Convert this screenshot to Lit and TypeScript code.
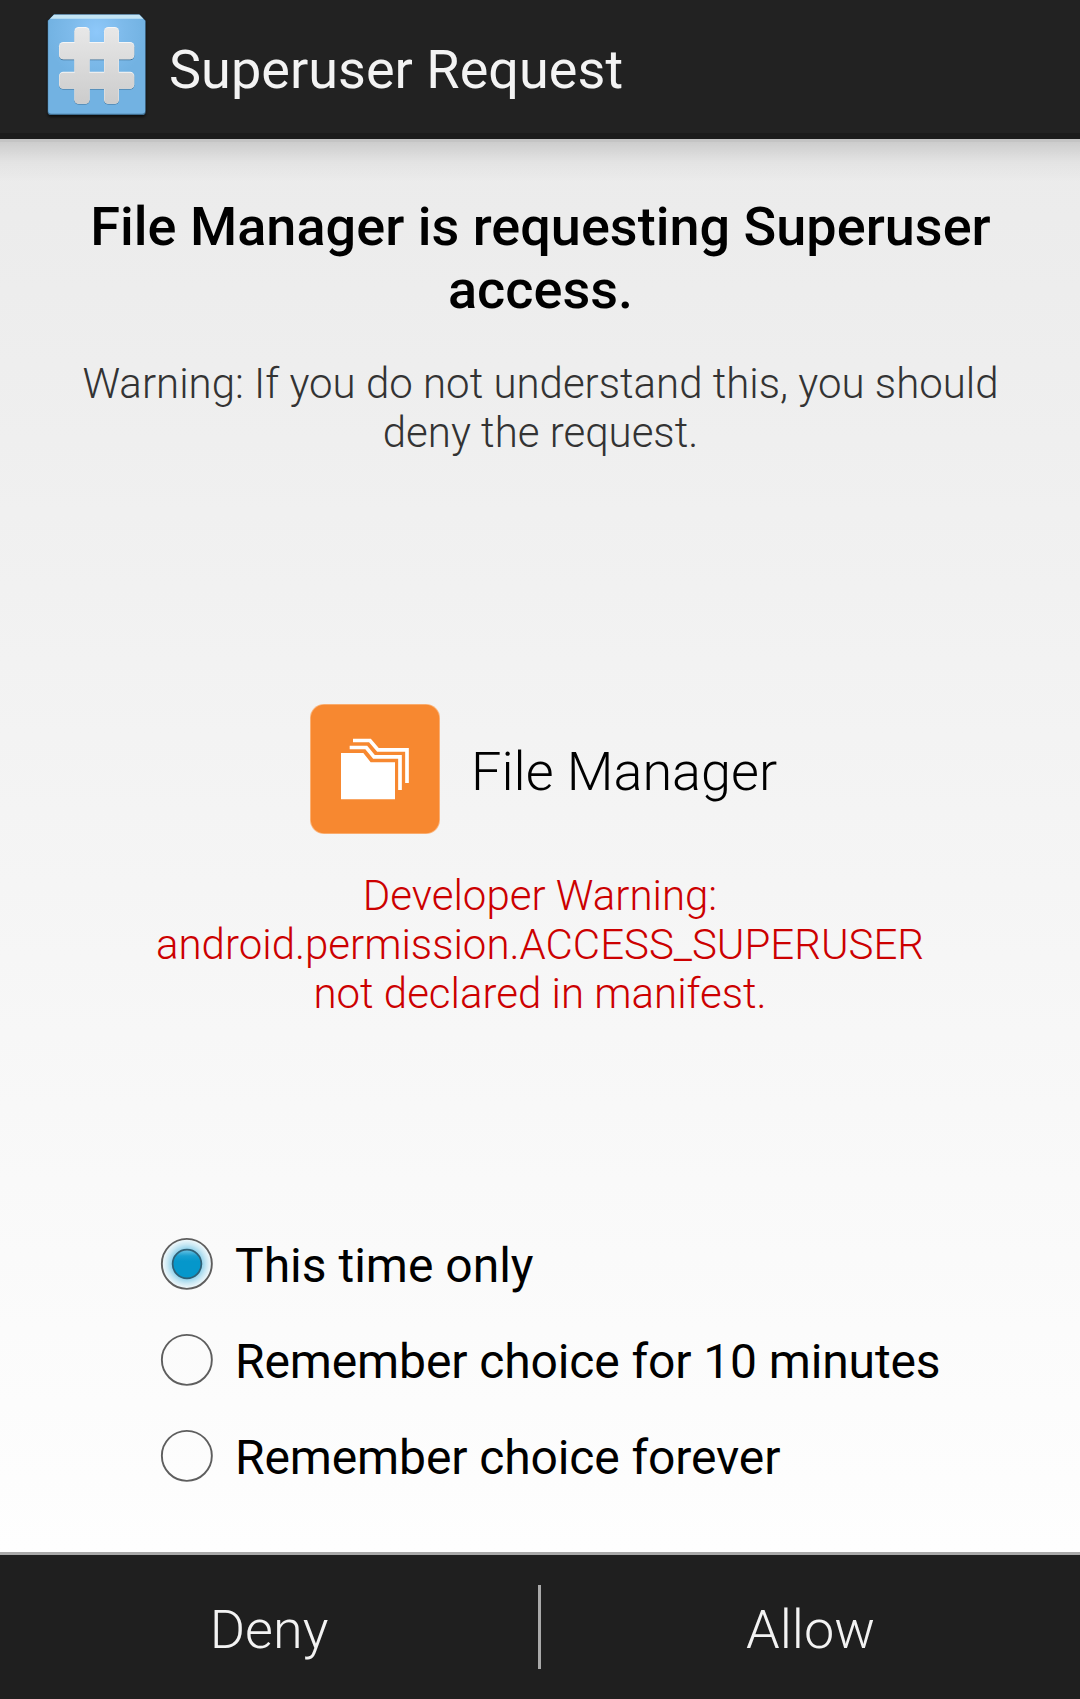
import { LitElement, html, css, svg } from "lit";
import { customElement, property, state } from "lit/decorators.js";
import { classMap } from "lit/directives/class-map.js";

@customElement("superuser-icon")
class SuperuserIcon extends LitElement {
  static styles = css`
    :host { display: block; }
    .icon { display: block; width: 105px; height: 133px; }
  `;

  private hash() {
    return svg`
      <rect x="133" y="81" width="46" height="230" rx="13" />
      <rect x="222" y="81" width="45" height="230" rx="13" />
      <rect x="87" y="126" width="226" height="52" rx="13" />
      <rect x="87" y="215" width="226" height="51" rx="13" />`;
  }

  render() {
    return html`
      <svg class="icon" viewBox="45 0 315 399" aria-hidden="true">
        <defs>
          <radialGradient id="face" gradientUnits="userSpaceOnUse" cx="200" cy="95" r="150">
            <stop offset="0" stop-color="#8ec8fa" />
            <stop offset="0.55" stop-color="#7dbaea" />
            <stop offset="1" stop-color="#72b2e2" />
          </radialGradient>
          <linearGradient id="metal" gradientUnits="userSpaceOnUse" x1="0" y1="81" x2="0" y2="311">
            <stop offset="0" stop-color="#e8e8e8" />
            <stop offset="1" stop-color="#cccccc" />
          </linearGradient>
          <filter id="soft" x="-10%" y="-10%" width="120%" height="125%">
            <feGaussianBlur stdDeviation="5" />
          </filter>
          <filter id="edge" x="-10%" y="-10%" width="120%" height="120%">
            <feGaussianBlur stdDeviation="1.3" />
          </filter>
        </defs>
        <rect x="54" y="60" width="292" height="290" rx="8" fill="#000" opacity="0.7" filter="url(#soft)" />
        <path d="M53 62 L72 43 H328 L347 62 V335 Q347 345 337 345 H63 Q53 345 53 335Z" fill="#3f6d8f" />
        <path d="M54.500 62 L72 44 H328 L345.500 62 V332 Q345.500 341 336 341 H64 Q54.500 341 54.500 332Z" fill="url(#face)" />
        <path d="M60 56 L72 44 H328 L340 56Z" fill="#c3e4f4" />
        <g fill="#2c5474" opacity="0.7" filter="url(#edge)" transform="translate(0 2.500)">${this.hash()}</g>
        <g fill="#f6f6f6">${this.hash()}</g>
        <g fill="url(#metal)">
          <rect x="134" y="84" width="44" height="227" rx="12" />
          <rect x="223" y="84" width="43" height="227" rx="12" />
          <rect x="88" y="129" width="224" height="49" rx="12" />
          <rect x="88" y="218" width="224" height="48" rx="12" />
        </g>
      </svg>
    `;
  }
}

@customElement("file-manager-icon")
class FileManagerIcon extends LitElement {
  static styles = css`
    :host { display: block; }
    .icon { display: block; width: 130px; height: 130px; }
  `;

  render() {
    return html`
      <svg class="icon" viewBox="30 42 390 390" aria-hidden="true">
        <rect x="30" y="42" width="390" height="390" rx="42" fill="#fbb780" />
        <rect x="32.500" y="44.500" width="385" height="385" rx="40" fill="#f78830" />
        <path d="M123 189H190L212 217H285V328H123Z" fill="#fff" />
        <path d="M149 172.500H199L222 200.500H300V300" fill="none" stroke="#fff" stroke-width="11" />
        <path d="M159 151.500H210L234 179.500H321V279" fill="none" stroke="#fff" stroke-width="11" />
      </svg>
    `;
  }
}

@customElement("choice-row")
class ChoiceRow extends LitElement {
  @property() label = "";
  @property({ type: Boolean }) checked = false;

  static styles = css`
    :host { display: block; }
    .row { display: flex; align-items: center; height: 96px; gap: 18px; cursor: pointer; }
    .mark { display: block; width: 60px; height: 60px; margin-bottom: 4px; }
    .label { font-size: 48px; line-height: 56px; white-space: nowrap; color: #000; }
    .long { letter-spacing: -0.12px; }
  `;

  render() {
    return html`
      <div class="row" role="radio" aria-checked=${this.checked ? "true" : "false"}>
        <svg class="mark" viewBox="0 0 60 60" aria-hidden="true">
          <defs>
            <radialGradient id="glow">
              <stop offset="0.550" stop-color="#86cde9" />
              <stop offset="0.780" stop-color="#c9e8f4" />
              <stop offset="1" stop-color="#f8fbfc" />
            </radialGradient>
            <linearGradient id="dot" x1="0" y1="0" x2="0" y2="1">
              <stop offset="0" stop-color="#6fc4e4" />
              <stop offset="0.220" stop-color="#189fd0" />
              <stop offset="0.400" stop-color="#0597cb" />
              <stop offset="1" stop-color="#0597cb" />
            </linearGradient>
          </defs>
          ${this.checked ? svg`<circle cx="29.850" cy="29.850" r="25" fill="url(#glow)" />` : null}
          <circle cx="29.850" cy="29.850" r="25" fill="none" stroke="#5e5e5e" stroke-width="1.900" />
          ${this.checked
            ? svg`<circle cx="30" cy="30" r="14.400" fill="url(#dot)" stroke="#2f6076" stroke-width="1.700" />`
            : null}
        </svg>
        <span class=${classMap({ label: true, long: this.label.length > 20 })}>${this.label}</span>
      </div>
    `;
  }
}

@customElement("app-root")
class AppRoot extends LitElement {
  @state() private selected = 0;

  private choices = ["This time only", "Remember choice for 10 minutes", "Remember choice forever"];

  static styles = css`
    :host {
      display: flex;
      flex-direction: column;
      width: 1080px;
      height: 1699px;
      font-family: Roboto, "Noto Sans", sans-serif;
      font-weight: 400;
      overflow: hidden;
    }
    .bar {
      box-sizing: border-box;
      display: flex;
      align-items: center;
      gap: 19px;
      height: 139px;
      padding-left: 45px;
      background: #222;
      border-bottom: 6px solid #1b1b1b;
      flex: none;
    }
    .title {
      margin: 6px 0 0;
      font-size: 54px;
      line-height: 63px;
      font-weight: 400;
      letter-spacing: 0.03px;
      color: #f3f3f3;
    }
    .content {
      box-sizing: border-box;
      flex: 1;
      display: flex;
      flex-direction: column;
      padding-top: 53px;
      border-top: 3px solid #c4c4c4;
      background:
        linear-gradient(rgba(0, 0, 0, 0.13), rgba(0, 0, 0, 0.035) 20px, rgba(0, 0, 0, 0) 40px) top / 100% 40px no-repeat,
        linear-gradient(#ebebeb, #fefefe);
    }
    .heading {
      margin: 0 47px 0 48px;
      text-align: center;
      font-size: 54px;
      line-height: 63px;
      font-weight: 500;
      letter-spacing: 0.02px;
      color: #000;
    }
    .notice {
      margin: 38px 47px 0 48px;
      text-align: center;
      font-size: 42px;
      line-height: 49px;
      font-weight: 300;
      color: #333;
    }
    .app { display: flex; align-items: center; gap: 31px; margin: 247px 0 0 310px; height: 130px; }
    .name { padding-top: 5px; font-size: 54px; line-height: 63px; font-weight: 300; color: #000; }
    .developer {
      margin: 37px 144px 0;
      text-align: center;
      font-size: 42px;
      line-height: 49px;
      font-weight: 300;
      color: #c00;
    }
    .choices { margin: 200px 0 0 157px; }
    .actions {
      box-sizing: border-box;
      display: flex;
      align-items: center;
      height: 147px;
      flex: none;
      background: #1f1f1f;
      border-top: 3px solid #a9a9a9;
    }
    .action {
      flex: 1;
      height: 144px;
      padding: 5px 0 0;
      border: 0;
      background: none;
      font: 300 54px/63px Roboto, "Noto Sans", sans-serif;
      color: #f3f3f3;
      cursor: pointer;
    }
    .deny { flex: 0 0 538px; }
    .divider { width: 3px; height: 84px; background: #a9a9a9; }
  `;

  render() {
    return html`
      <header class="bar">
        <superuser-icon></superuser-icon>
        <h1 class="title">Superuser Request</h1>
      </header>
      <main class="content">
        <h2 class="heading">File Manager is requesting Superuser access.</h2>
        <p class="notice">Warning: If you do not understand this, you should deny the request.</p>
        <div class="app">
          <file-manager-icon></file-manager-icon>
          <span class="name">File Manager</span>
        </div>
        <p class="developer">Developer Warning: android.permission.ACCESS_SUPERUSER not declared in manifest.</p>
        <div class="choices" role="radiogroup">
          ${this.choices.map(
            (label, i) => html`
              <choice-row
                .label=${label}
                .checked=${this.selected === i}
                @click=${() => (this.selected = i)}
              ></choice-row>
            `,
          )}
        </div>
      </main>
      <footer class="actions">
        <button class="action deny">Deny</button>
        <span class="divider"></span>
        <button class="action">Allow</button>
      </footer>
    `;
  }
}
